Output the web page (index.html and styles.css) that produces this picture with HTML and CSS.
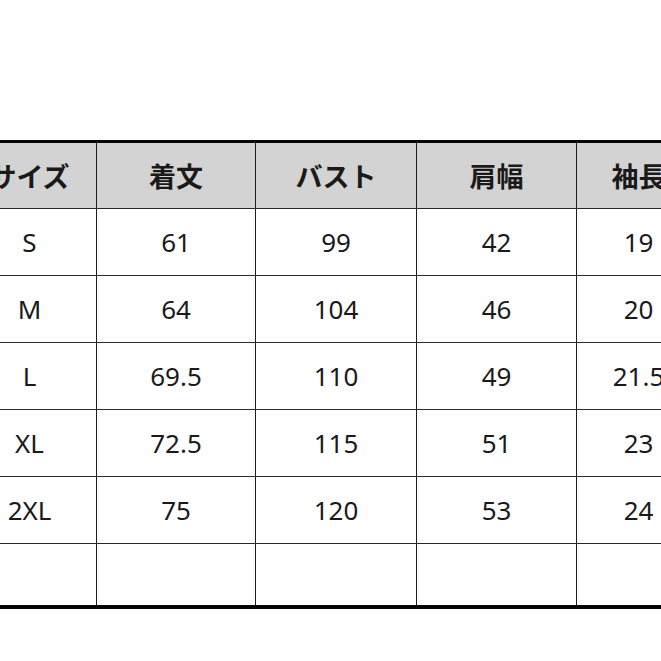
FILE: index.html
```html
<!DOCTYPE html>
<html lang="ja">
<head>
<meta charset="utf-8">
<title>サイズ表</title>
<link rel="stylesheet" href="styles.css">
</head>
<body>
<div class="page">
  <table class="size-table">
    <colgroup>
      <col class="c1"><col class="c2"><col class="c3"><col class="c4"><col class="c5">
    </colgroup>
    <thead>
      <tr class="head">
        <th>サイズ</th><th>着文</th><th>バスト</th><th>肩幅</th><th>袖長</th>
      </tr>
    </thead>
    <tbody>
      <tr><td>S</td><td>61</td><td>99</td><td>42</td><td>19</td></tr>
      <tr><td>M</td><td>64</td><td>104</td><td>46</td><td>20</td></tr>
      <tr><td>L</td><td>69.5</td><td>110</td><td>49</td><td>21.5</td></tr>
      <tr><td>XL</td><td>72.5</td><td>115</td><td>51</td><td>23</td></tr>
      <tr><td>2XL</td><td>75</td><td>120</td><td>53</td><td>24</td></tr>
      <tr class="empty"><td></td><td></td><td></td><td></td><td></td></tr>
    </tbody>
  </table>
</div>
</body>
</html>
```
FILE: styles.css
```css
html, body {
  margin: 0;
  padding: 0;
  background: #ffffff;
  overflow: hidden;
}
.page {
  width: 661px;
  height: 661px;
  overflow: hidden;
  padding-top: 140px;
  box-sizing: border-box;
}
.size-table {
  margin-left: -38px;
  border-collapse: collapse;
  table-layout: fixed;
  width: 738px;
  font-family: "Noto Sans", "Noto Sans CJK JP", sans-serif;
  color: #1a1a1a;
  border-top: 3px solid #050505;
  border-bottom: 4px solid #050505;
}
.c1 { width: 134px; }
.c2 { width: 159px; }
.c3 { width: 161px; }
.c4 { width: 160px; }
.c5 { width: 124px; }
.size-table th,
.size-table td {
  border-left: 1px solid #1e1e1e;
  border-right: 1px solid #1e1e1e;
  border-top: 1px solid #2a2a2a;
  border-bottom: 1px solid #2a2a2a;
  text-align: center;
  padding: 0;
}
.size-table th {
  background: #d3d3d3;
  font-family: "Noto Sans CJK JP", sans-serif;
  font-weight: 700;
  font-size: 27px;
  height: 65px;
  border-top: 3px solid #050505;
}
.size-table td {
  font-size: 26px;
  height: 66px;
}
.size-table .empty td {
  height: 61px;
  border-bottom: 4px solid #050505;
}
```
